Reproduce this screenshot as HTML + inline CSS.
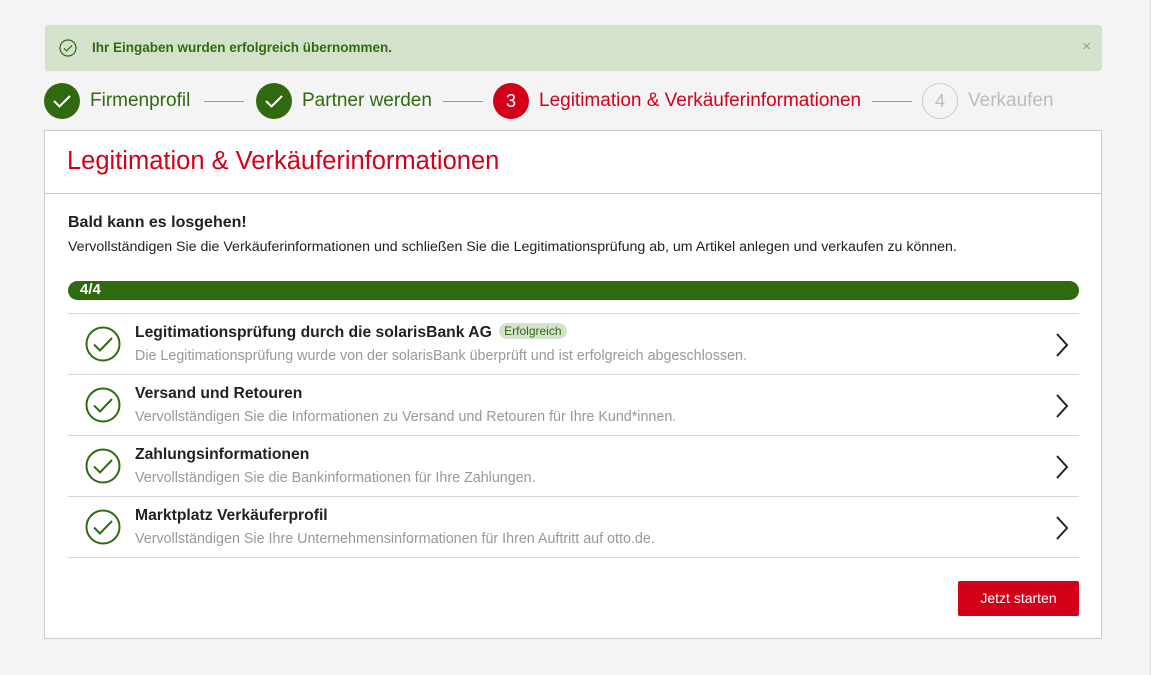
<!DOCTYPE html>
<html><head><meta charset="utf-8"><style>
*{margin:0;padding:0;box-sizing:border-box}
body{width:1151px;height:675px;background:#f4f4f4;font-family:"Liberation Sans",sans-serif;position:relative;overflow:hidden;border-right:1px solid #ddd}
.a{position:absolute}
.banner{left:45px;top:25px;width:1057px;height:46px;background:#d5e2cb;border-radius:3px}
.banner .t{left:47px;top:15px;font-size:13.5px;font-weight:bold;color:#2f6b0e}
.step{top:83px;height:36px;display:flex;align-items:center;font-size:19px}
.c{width:36px;height:36px;border-radius:50%;display:flex;align-items:center;justify-content:center;color:#fff;font-size:18px;margin-right:10px}
.line{top:101px;height:1px;background:#999;width:40px}
.card{left:44px;top:130px;width:1058px;height:509px;background:#fff;border:1px solid #ccc}
.row{left:23px;width:1011px;height:61px;border-top:1px solid #d8d8d8}
.row .ic{left:17px;top:12px}
.row .h{left:67px;top:10px;font-size:15.7px;font-weight:bold;color:#222}
.row .s{left:67px;top:34px;font-size:14.3px;color:#999}
.row .ch{right:10px;top:18px}
</style></head><body>
<div class="a banner">
<svg class="a" style="left:14px;top:14px" width="18" height="18" viewBox="0 0 18 18"><circle cx="9" cy="9" r="8" fill="none" stroke="#2f6b0e" stroke-width="1.2"/><path d="M5 9.3l2.7 2.6 5.3-5.5" fill="none" stroke="#2f6b0e" stroke-width="1.2"/></svg>
<div class="a t">Ihr Eingaben wurden erfolgreich übernommen.</div>
<div class="a" style="right:11px;top:13px;color:#999;font-size:15px">×</div>
</div>
<div class="a step" style="left:44px"><div class="c" style="background:#2f6b0e"><svg width="20" height="16" viewBox="0 0 20 16"><path d="M2 8l5.5 5.5L18 3" fill="none" stroke="#fff" stroke-width="2"/></svg></div><span style="color:#2f6b0e">Firmenprofil</span></div>
<div class="a line" style="left:204px"></div>
<div class="a step" style="left:256px"><div class="c" style="background:#2f6b0e"><svg width="20" height="16" viewBox="0 0 20 16"><path d="M2 8l5.5 5.5L18 3" fill="none" stroke="#fff" stroke-width="2"/></svg></div><span style="color:#2f6b0e">Partner werden</span></div>
<div class="a line" style="left:443px"></div>
<div class="a step" style="left:493px"><div class="c" style="background:#d4001a">3</div><span style="color:#d4001a">Legitimation &amp; Verkäuferinformationen</span></div>
<div class="a line" style="left:872px"></div>
<div class="a step" style="left:922px"><div class="c" style="border:1px solid #ccc;color:#bbb">4</div><span style="color:#bbb">Verkaufen</span></div>
<div class="a card">
<div class="a" style="left:22px;top:16px;font-size:25.5px;color:#d4001a">Legitimation &amp; Verkäuferinformationen</div>
<div class="a" style="left:0;top:62px;width:1056px;height:1px;background:#ccc"></div>
<div class="a" style="left:23px;top:83px;font-size:16px;font-weight:bold;color:#222">Bald kann es losgehen!</div>
<div class="a" style="left:23px;top:108px;font-size:14.2px;color:#222">Vervollständigen Sie die Verkäuferinformationen und schließen Sie die Legitimationsprüfung ab, um Artikel anlegen und verkaufen zu können.</div>
<div class="a" style="left:23px;top:150px;width:1011px;height:19px;background:#2f6b0e;border-radius:10px;color:#fff;font-weight:bold;font-size:15px;padding-left:12px;line-height:18px">4/4</div>
<div class="a row" style="top:182px"><svg class="a ic" width="36" height="36" viewBox="0 0 36 36"><circle cx="18" cy="18" r="16.5" fill="none" stroke="#2f6b0e" stroke-width="2"/><path d="M9 18.5l6 6L27 12" fill="none" stroke="#2f6b0e" stroke-width="2"/></svg><div class="a h">Legitimationsprüfung durch die solarisBank AG <span style="background:#d5e2cb;color:#2f6b0e;font-weight:normal;font-size:12px;padding:1px 5px;border-radius:9px;margin-left:3px;vertical-align:2px">Erfolgreich</span></div><div class="a s">Die Legitimationsprüfung wurde von der solarisBank überprüft und ist erfolgreich abgeschlossen.</div><svg class="a ch" width="14" height="26" viewBox="0 0 14 26"><path d="M2 2l10 11L2 24" fill="none" stroke="#222" stroke-width="2"/></svg></div>
<div class="a row" style="top:243px"><svg class="a ic" width="36" height="36" viewBox="0 0 36 36"><circle cx="18" cy="18" r="16.5" fill="none" stroke="#2f6b0e" stroke-width="2"/><path d="M9 18.5l6 6L27 12" fill="none" stroke="#2f6b0e" stroke-width="2"/></svg><div class="a h">Versand und Retouren</div><div class="a s">Vervollständigen Sie die Informationen zu Versand und Retouren für Ihre Kund*innen.</div><svg class="a ch" width="14" height="26" viewBox="0 0 14 26"><path d="M2 2l10 11L2 24" fill="none" stroke="#222" stroke-width="2"/></svg></div>
<div class="a row" style="top:304px"><svg class="a ic" width="36" height="36" viewBox="0 0 36 36"><circle cx="18" cy="18" r="16.5" fill="none" stroke="#2f6b0e" stroke-width="2"/><path d="M9 18.5l6 6L27 12" fill="none" stroke="#2f6b0e" stroke-width="2"/></svg><div class="a h">Zahlungsinformationen</div><div class="a s">Vervollständigen Sie die Bankinformationen für Ihre Zahlungen.</div><svg class="a ch" width="14" height="26" viewBox="0 0 14 26"><path d="M2 2l10 11L2 24" fill="none" stroke="#222" stroke-width="2"/></svg></div>
<div class="a row" style="top:365px;border-bottom:1px solid #d8d8d8;height:62px"><svg class="a ic" width="36" height="36" viewBox="0 0 36 36"><circle cx="18" cy="18" r="16.5" fill="none" stroke="#2f6b0e" stroke-width="2"/><path d="M9 18.5l6 6L27 12" fill="none" stroke="#2f6b0e" stroke-width="2"/></svg><div class="a h">Marktplatz Verkäuferprofil</div><div class="a s">Vervollständigen Sie Ihre Unternehmensinformationen für Ihren Auftritt auf otto.de.</div><svg class="a ch" width="14" height="26" viewBox="0 0 14 26"><path d="M2 2l10 11L2 24" fill="none" stroke="#222" stroke-width="2"/></svg></div>
<div class="a" style="left:913px;top:450px;width:121px;height:35px;background:#d4001a;border-radius:2px;color:#fff;font-size:14px;text-align:center;line-height:35px">Jetzt starten</div>
</div>
</body></html>
